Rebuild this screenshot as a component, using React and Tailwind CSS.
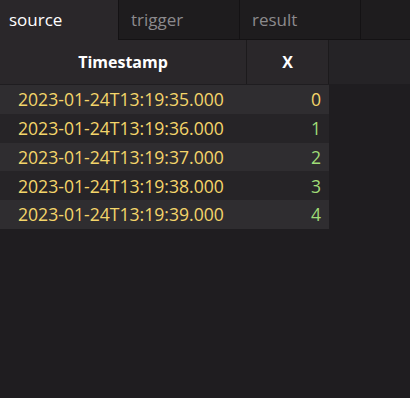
const rows = [
  { ts: '2023-01-24T13:19:35.000', x: 0 },
  { ts: '2023-01-24T13:19:36.000', x: 1 },
  { ts: '2023-01-24T13:19:37.000', x: 2 },
  { ts: '2023-01-24T13:19:38.000', x: 3 },
  { ts: '2023-01-24T13:19:39.000', x: 4 },
];

const tabs = ['source', 'trigger', 'result'];

export default function App() {
  return (
    <div className="h-[398px] w-[410px] overflow-hidden bg-[#1f1d20] font-['Open_Sans',sans-serif]">
      <div className="flex h-10">
        {tabs.map((tab, i) => (
          <div
            key={tab}
            className={
              i === 0
                ? 'flex w-[118px] items-center px-[9px] text-[17px] text-white bg-[#2a272a]'
                : 'flex w-[121px] items-center border-b border-l border-[#141214] bg-[#1e1c1e] px-[12px] text-[17px] text-[#8c8a8d]'
            }
          >
            {tab}
          </div>
        ))}
        <div className="flex-1 border-b border-l border-[#141214] bg-[#1e1c1e]" />
      </div>

      <div className="flex h-11 bg-[#2a272a]">
        <div className="flex w-[247px] items-center justify-center border-r border-[#1c1a1c] text-[16px] font-bold text-white">
          Timestamp
        </div>
        <div className="flex w-[82px] items-center justify-center border-r border-[#1c1a1c] text-[16px] font-bold text-white">
          X
        </div>
        <div className="flex-1 bg-[#252326]" />
      </div>

      <div className="w-[329px] pt-px">
        {rows.map((r, i) => (
          <div
            key={r.ts}
            className={`flex h-[28.8px] items-center text-[17.6px] font-medium ${i % 2 === 0 ? 'bg-[#2f2d30]' : 'bg-[#262427]'}`}
          >
            <div className="w-[247px] pl-[18px] text-[#f4d56a]">{r.ts}</div>
            <div className={`flex-1 pr-[8px] text-right ${r.x === 0 ? 'text-[#f4d56a]' : 'text-[#9fdc77]'}`}>
              {r.x}
            </div>
          </div>
        ))}
      </div>
    </div>
  );
}
